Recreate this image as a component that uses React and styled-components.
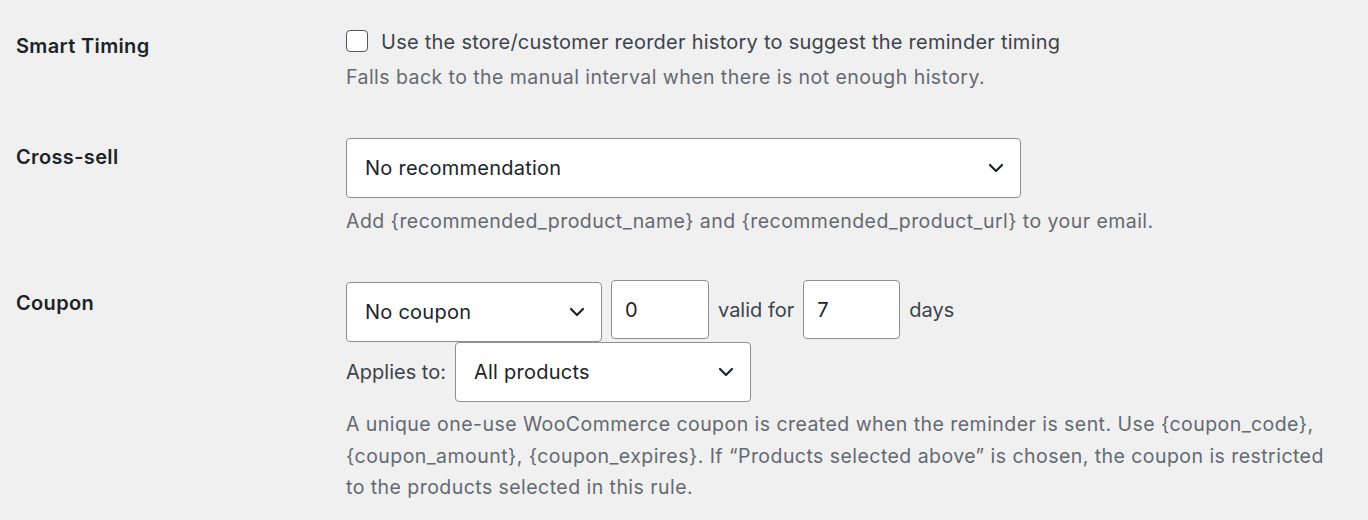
import React from "react";
import styled, { createGlobalStyle } from "styled-components";

const Global = createGlobalStyle`
  html, body { margin: 0; padding: 0; background: #f0f0f1; }
  body {
    font-family: Inter, "Noto Sans", "Liberation Sans", sans-serif;
    color: #1d2327;
    -webkit-font-smoothing: antialiased;
  }
  * { box-sizing: border-box; }
`;

const Page = styled.div`
  padding: 4px 0 0 16px;
`;

const Row = styled.div`
  display: grid;
  grid-template-columns: 330px 995px;
  padding: 23px 0;
`;

const Label = styled.div`
  font-size: 20px;
  font-weight: 600;
  line-height: 30px;
  letter-spacing: 0.35px;
  padding-top: ${(p) => p.$top || 4}px;
  color: #1d2327;
`;

const Field = styled.div`
  display: flex;
  flex-direction: column;
  align-items: flex-start;
`;

const CheckLine = styled.label`
  display: flex;
  align-items: center;
  gap: 13px;
  font-size: 20px;
  line-height: 30px;
  letter-spacing: 0.25px;
  color: #3c434a;
`;

const Box = styled.span`
  width: 22px;
  height: 22px;
  border: 1.5px solid #50575e;
  border-radius: 4px;
  background: #fff;
  flex: none;
  margin-top: -3px;
`;

const Desc = styled.p`
  margin: ${(p) => p.$mt || 5}px 0 0;
  font-size: 19.5px;
  line-height: ${(p) => p.$lh || 30}px;
  letter-spacing: 0.45px;
  color: #646970;
  max-width: 995px;
`;

const SelectBox = styled.div`
  width: ${(p) => p.$w}px;
  height: 60px;
  margin-top: ${(p) => p.$mt || 0}px;
  display: flex;
  align-items: center;
  justify-content: space-between;
  padding: 0 16px 0 18px;
  background: #fff;
  border: 1px solid #8c8f94;
  border-radius: 4px;
  font-size: 20px;
  letter-spacing: 0.25px;
  color: #1d2327;
  flex: none;
`;

const Input = styled.div`
  width: ${(p) => p.$w}px;
  height: 59px;
  display: flex;
  align-items: center;
  padding: 0 13px;
  background: #fff;
  border: 1px solid #8c8f94;
  border-radius: 4px;
  font-size: 20px;
  color: #1d2327;
  flex: none;
`;

const Line = styled.div`
  display: flex;
  align-items: flex-start;
  gap: 9px;
  margin-top: ${(p) => p.$mt || 0}px;
`;

const Inline = styled.span`
  font-size: 20px;
  line-height: 30px;
  color: #3c434a;
  align-self: center;
  margin-top: ${(p) => p.$mt || 0}px;
`;

const Chevron = () => (
  <svg width="16" height="10" viewBox="0 0 16 10" fill="none">
    <path d="M2 2l6 6 6-6" stroke="#1d2327" strokeWidth="2.2" strokeLinecap="round" strokeLinejoin="round" />
  </svg>
);

const Select = ({ w, mt, children }) => (
  <SelectBox $w={w} $mt={mt}>
    <span>{children}</span>
    <Chevron />
  </SelectBox>
);

const crossSellDesc =
  "Add {recommended_product_name} and {recommended_product_url} to your email.";
const couponDesc =
  "A unique one-use WooCommerce coupon is created when the reminder is sent. Use {coupon_code}, {coupon_amount}, {coupon_expires}. If “Products selected above” is chosen, the coupon is restricted to the products selected in this rule.";

export default function App() {
  return (
    <>
      <Global />
      <Page>
        <Row>
          <Label>Smart Timing</Label>
          <Field>
            <CheckLine>
              <Box />
              Use the store/customer reorder history to suggest the reminder timing
            </CheckLine>
            <Desc>Falls back to the manual interval when there is not enough history.</Desc>
          </Field>
        </Row>
        <Row>
          <Label>Cross-sell</Label>
          <Field>
            <Select w={675}>No recommendation</Select>
            <Desc $mt={8}>{crossSellDesc}</Desc>
          </Field>
        </Row>
        <Row>
          <Label $top={6}>Coupon</Label>
          <Field>
            <Line $mt={-2}>
              <Select w={256} mt={2}>No coupon</Select>
              <Input $w={98}>0</Input>
              <Inline $mt={-2}>valid for</Inline>
              <Input $w={97}>7</Input>
              <Inline $mt={-2}>days</Inline>
            </Line>
            <Line>
              <Inline>Applies to:</Inline>
              <Select w={296}>All products</Select>
            </Line>
            <Desc $mt={7} $lh={31.5}>{couponDesc}</Desc>
          </Field>
        </Row>
      </Page>
    </>
  );
}
